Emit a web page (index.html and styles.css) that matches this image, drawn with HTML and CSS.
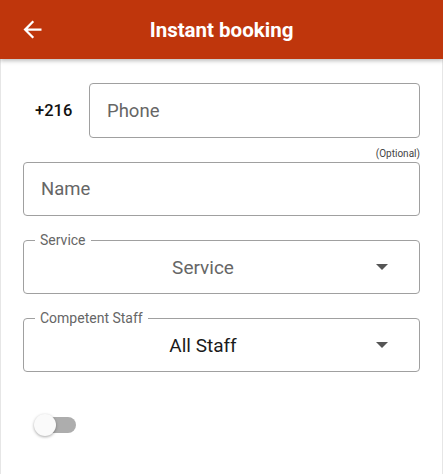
FILE: index.html
```html
<!DOCTYPE html>
<html lang="en">
<head>
<meta charset="utf-8">
<title>Instant booking</title>
<link rel="stylesheet" href="styles.css">
</head>
<body>
<header class="appbar">
  <div class="appbar-left">
    <svg class="back" viewBox="0 0 24 24" width="27" height="27" aria-hidden="true">
      <path d="M20 11H7.83l5.59-5.59L12 4l-8 8 8 8 1.41-1.41L7.83 13H20v-2z" fill="#fff"/>
    </svg>
  </div>
  <h1 class="title">Instant booking</h1>
  <div></div>
</header>
<main class="content">
  <div class="phone-row">
    <span class="prefix">+216</span>
    <div class="field phone-field"><span class="placeholder">Phone</span></div>
  </div>
  <div class="optional">(Optional)</div>
  <div class="field"><span class="placeholder">Name</span></div>

  <div class="field select">
    <span class="floating">Service</span>
    <span class="select-value muted">Service</span>
    <span class="caret"></span>
  </div>

  <div class="field select">
    <span class="floating">Competent Staff</span>
    <span class="select-value">All Staff</span>
    <span class="caret"></span>
  </div>

  <div class="switch-row">
    <div class="switch">
      <span class="track"></span>
      <span class="thumb"></span>
    </div>
  </div>
</main>
</body>
</html>
```
FILE: styles.css
```css
* { box-sizing: border-box; }
html, body {
  margin: 0;
  padding: 0;
  background: #fff;
  font-family: Roboto, "Liberation Sans", sans-serif;
}
body { height: 474px; display: flex; flex-direction: column; }

.appbar {
  height: 59px;
  background: #bf360c;
  display: grid;
  grid-template-columns: 1fr auto 1fr;
  align-items: center;
  box-shadow: 0 2px 4px rgba(0,0,0,0.25);
  position: relative;
  z-index: 1;
}
.appbar-left { display: flex; align-items: center; padding-left: 19px; }
.back { display: block; }
.title {
  margin: 0;
  color: #fff;
  font-size: 20.5px;
  font-weight: 700;
}

.content {
  flex: 1;
  border-left: 1px solid #e6e6e6;
  border-right: 1px solid #e6e6e6;
  padding: 24px 22px 0;
  display: flex;
  flex-direction: column;
}

.phone-row { display: flex; align-items: center; }
.prefix {
  width: 66px;
  padding-left: 12px;
  font-size: 16.5px;
  font-weight: 500;
  color: #111;
}
.field {
  height: 54px;
  border: 1px solid #a0a0a0;
  border-radius: 4px;
  display: flex;
  align-items: center;
  padding-left: 17px;
  position: relative;
}
.phone-field { flex: 1; height: 55px; }
.placeholder { font-size: 18.5px; color: #666; }

.optional {
  margin-top: 10px;
  margin-bottom: 2px;
  height: 12px;
  line-height: 12px;
  font-size: 10px;
  color: #444;
  text-align: right;
}

.select { margin-top: 24px; padding-left: 12px; padding-right: 25px; }
.floating {
  position: absolute;
  left: 11px;
  top: -8px;
  padding: 0 5px;
  background: #fff;
  font-size: 14px;
  line-height: 15px;
  color: #666;
}
.select-value {
  flex: 1;
  text-align: center;
  font-size: 19px;
  color: #1a1a1a;
}
.select-value.muted { color: #666; }
.caret {
  width: 24px;
  height: 24px;
  display: flex;
  align-items: center;
  justify-content: center;
}
.caret::before {
  content: "";
  border-left: 6.5px solid transparent;
  border-right: 6.5px solid transparent;
  border-top: 6.5px solid #555;
}

.switch-row { margin-top: 41px; padding-left: 11px; }
.switch { width: 42px; height: 24px; display: flex; align-items: center; position: relative; }
.track {
  margin-left: 6px;
  width: 36px;
  height: 16px;
  border-radius: 8px;
  background: #adadad;
}
.thumb {
  position: absolute;
  left: 0;
  top: 1px;
  width: 22px;
  height: 22px;
  border-radius: 50%;
  background: #fafafa;
  box-shadow: 0 1px 3px rgba(0,0,0,0.35);
}
```
